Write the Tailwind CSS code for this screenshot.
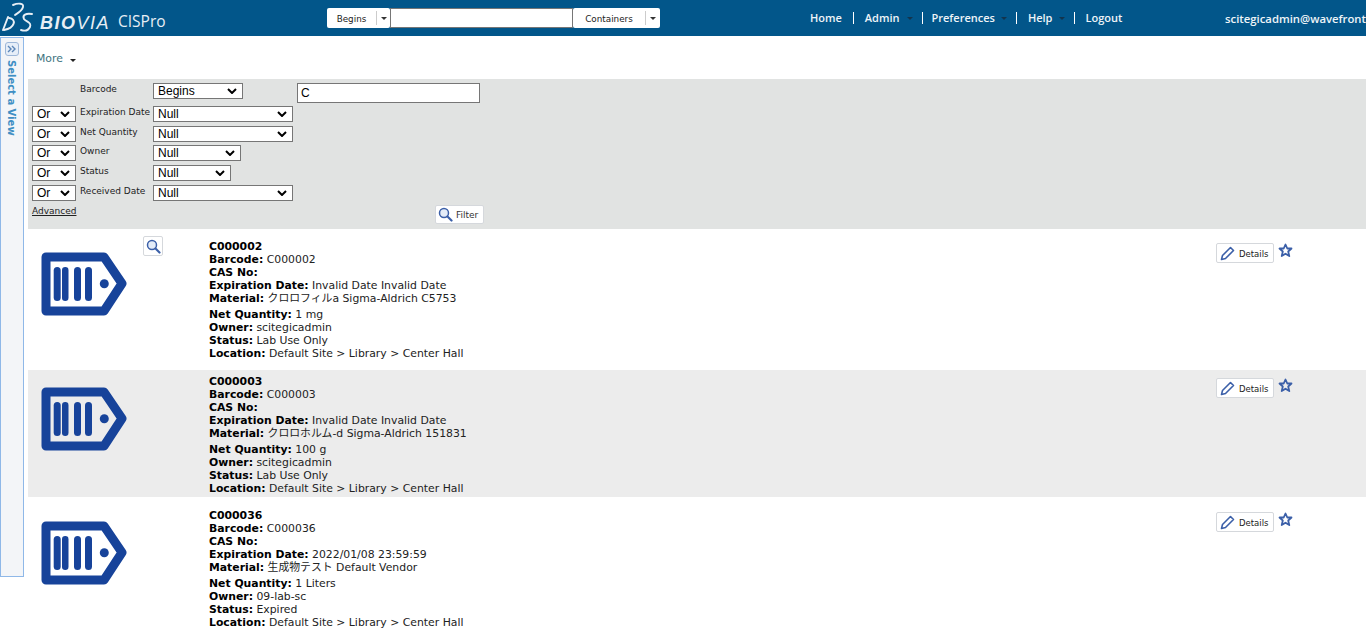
<!DOCTYPE html>
<html>
<head>
<meta charset="utf-8">
<script src="https://cdn.jsdelivr.net/npm/@tailwindcss/browser@4"></script>
<title>BIOVIA CISPro</title>
</head>
<body class="h-[635px] overflow-hidden bg-white font-['DejaVu_Sans',sans-serif] text-[10.85px] text-black">
<header class="flex h-9 items-start bg-[#02568a] text-white">
  <div class="flex h-9 w-[327px] items-start">
    <svg width="36" height="36" viewBox="0 0 36 36" fill="none" stroke="#e8eff5" stroke-width="1.9" stroke-linecap="round">
      <path d="M13 5 C18 3 24 3 23 7 C22 11 18 13 15 15"/>
      <path d="M8 17 L3 30"/>
      <path d="M9 18 C17 19 15 28 4 30"/>
      <path d="M32 14 C26 13 22 15 24 19 C26 22 32 22 30 27 C28 31 24 31 21 30"/>
    </svg>
    <span class="ml-1 mt-[10px] font-['Liberation_Sans',sans-serif] text-[18px] font-bold italic tracking-[1.5px] text-[#e8eff5]">BIO<span class="font-normal">VIA</span></span>
    <span class="ml-2 mt-[10px] font-['Open_Sans',sans-serif] text-[15.5px] text-[#e8eff5]">CISPro</span>
  </div>
  <div class="mt-2 flex h-5 items-stretch text-[8.8px] text-[#222]">
    <div class="flex w-[63px] items-center rounded-[2px] bg-white">
      <span class="w-[49px] pt-[3px] text-center">Begins</span>
      <span class="h-[14px] w-px bg-[#ccc]"></span>
      <span class="ml-1 h-0 w-0 border-x-[3px] border-t-[3px] border-x-transparent border-t-[#333]"></span>
    </div>
    <input type="text" class="w-[183px] border border-[#767676] bg-white">
    <div class="flex w-[87px] items-center rounded-[2px] bg-white">
      <span class="w-[72px] pt-[3px] text-center">Containers</span>
      <span class="h-[14px] w-px bg-[#ccc]"></span>
      <span class="ml-1 h-0 w-0 border-x-[3px] border-t-[3px] border-x-transparent border-t-[#333]"></span>
    </div>
  </div>
  <nav class="ml-[150px] mt-[11px] flex items-center font-['Open_Sans',sans-serif] text-[11px] leading-[14px] font-semibold text-[#eef4f8]">
    <span>Home</span>
    <span class="mx-[11px] h-3 w-px bg-white"></span>
    <span>Admin</span>
    <span class="ml-[7px] mr-[9px] h-0 w-0 border-x-[3px] border-t-[3px] border-x-transparent border-t-[#12344d]"></span>
    <span class="mr-[9px] h-3 w-px bg-white"></span>
    <span>Preferences</span>
    <span class="ml-[6px] mr-[9px] h-0 w-0 border-x-[3px] border-t-[3px] border-x-transparent border-t-[#12344d]"></span>
    <span class="mr-[11px] h-3 w-px bg-white"></span>
    <span>Help</span>
    <span class="ml-[7px] mr-[9px] h-0 w-0 border-x-[3px] border-t-[3px] border-x-transparent border-t-[#12344d]"></span>
    <span class="mr-[10px] h-3 w-px bg-white"></span>
    <span>Logout</span>
  </nav>
  <div class="ml-auto mt-3 whitespace-nowrap font-['Open_Sans',sans-serif] text-[11.3px] leading-[14px] font-semibold text-[#eef4f8]">scitegicadmin@wavefront</div>
</header>
<div class="flex items-start">
  <aside class="mt-px flex h-[540px] w-6 shrink-0 flex-col items-center border border-[#8fb8e8] bg-[#f3f5f8] pt-1">
    <div class="flex h-[14px] w-[14px] items-center justify-center rounded-[3px] border border-[#9db7d8] bg-[#e6eef8] text-[#5c86b8]">
      <svg width="10" height="8" viewBox="0 0 10 8" fill="none" stroke="currentColor" stroke-width="1.4"><path d="M1 1l3 3-3 3M5 1l3 3-3 3"/></svg>
    </div>
    <span class="mr-[3px] mt-1 text-[10px] font-bold leading-3 text-[#3f8fc4] [writing-mode:vertical-rl]">Select a View</span>
  </aside>
  <main class="ml-1 min-w-0 flex-1">
    <div class="flex h-[43px] items-center pl-2 pt-[3px] text-[#3e7480]">
      <span>More</span>
      <span class="ml-[7px] mt-[3px] h-0 w-0 border-x-[3px] border-t-[3px] border-x-transparent border-t-[#222]"></span>
    </div>
    <section class="h-[150px] bg-[#e1e3e2] pl-1 pt-1 text-[9px] leading-3 text-[#222]">
      <div class="flex h-[23px] items-start">
        <span class="ml-12 w-[73px] whitespace-nowrap">Barcode</span>
        <select class="h-4 w-[90px] appearance-none border border-[#767676] bg-white bg-[url('data:image/svg+xml,%3Csvg%20xmlns=%22http://www.w3.org/2000/svg%22%20width=%2210%22%20height=%226%22%3E%3Cpath%20d=%22M1%201l4%204%204-4%22%20fill=%22none%22%20stroke=%22%23000%22%20stroke-width=%222%22/%3E%3C/svg%3E')] bg-[position:right_5px_center] bg-no-repeat pl-1 font-['Liberation_Sans',sans-serif] text-[12px] leading-[14px] text-black"><option>Begins</option></select>
        <input type="text" value="C" class="ml-[54px] h-5 w-[183px] border border-[#767676] bg-white px-[3px] font-['Liberation_Sans',sans-serif] text-[12px] text-black">
      </div>
      <div class="flex h-5 items-start">
        <select class="h-4 w-11 appearance-none border border-[#767676] bg-white bg-[url('data:image/svg+xml,%3Csvg%20xmlns=%22http://www.w3.org/2000/svg%22%20width=%2210%22%20height=%226%22%3E%3Cpath%20d=%22M1%201l4%204%204-4%22%20fill=%22none%22%20stroke=%22%23000%22%20stroke-width=%222%22/%3E%3C/svg%3E')] bg-[position:right_5px_center] bg-no-repeat pl-1 font-['Liberation_Sans',sans-serif] text-[12px] leading-[14px] text-black"><option>Or</option></select>
        <span class="ml-1 w-[73px] whitespace-nowrap">Expiration Date</span>
        <select class="h-4 w-[140px] appearance-none border border-[#767676] bg-white bg-[url('data:image/svg+xml,%3Csvg%20xmlns=%22http://www.w3.org/2000/svg%22%20width=%2210%22%20height=%226%22%3E%3Cpath%20d=%22M1%201l4%204%204-4%22%20fill=%22none%22%20stroke=%22%23000%22%20stroke-width=%222%22/%3E%3C/svg%3E')] bg-[position:right_5px_center] bg-no-repeat pl-1 font-['Liberation_Sans',sans-serif] text-[12px] leading-[14px] text-black"><option>Null</option></select>
      </div>
      <div class="flex h-[19px] items-start">
        <select class="h-4 w-11 appearance-none border border-[#767676] bg-white bg-[url('data:image/svg+xml,%3Csvg%20xmlns=%22http://www.w3.org/2000/svg%22%20width=%2210%22%20height=%226%22%3E%3Cpath%20d=%22M1%201l4%204%204-4%22%20fill=%22none%22%20stroke=%22%23000%22%20stroke-width=%222%22/%3E%3C/svg%3E')] bg-[position:right_5px_center] bg-no-repeat pl-1 font-['Liberation_Sans',sans-serif] text-[12px] leading-[14px] text-black"><option>Or</option></select>
        <span class="ml-1 w-[73px] whitespace-nowrap">Net Quantity</span>
        <select class="h-4 w-[140px] appearance-none border border-[#767676] bg-white bg-[url('data:image/svg+xml,%3Csvg%20xmlns=%22http://www.w3.org/2000/svg%22%20width=%2210%22%20height=%226%22%3E%3Cpath%20d=%22M1%201l4%204%204-4%22%20fill=%22none%22%20stroke=%22%23000%22%20stroke-width=%222%22/%3E%3C/svg%3E')] bg-[position:right_5px_center] bg-no-repeat pl-1 font-['Liberation_Sans',sans-serif] text-[12px] leading-[14px] text-black"><option>Null</option></select>
      </div>
      <div class="flex h-5 items-start">
        <select class="h-4 w-11 appearance-none border border-[#767676] bg-white bg-[url('data:image/svg+xml,%3Csvg%20xmlns=%22http://www.w3.org/2000/svg%22%20width=%2210%22%20height=%226%22%3E%3Cpath%20d=%22M1%201l4%204%204-4%22%20fill=%22none%22%20stroke=%22%23000%22%20stroke-width=%222%22/%3E%3C/svg%3E')] bg-[position:right_5px_center] bg-no-repeat pl-1 font-['Liberation_Sans',sans-serif] text-[12px] leading-[14px] text-black"><option>Or</option></select>
        <span class="ml-1 w-[73px] whitespace-nowrap">Owner</span>
        <select class="h-4 w-[88px] appearance-none border border-[#767676] bg-white bg-[url('data:image/svg+xml,%3Csvg%20xmlns=%22http://www.w3.org/2000/svg%22%20width=%2210%22%20height=%226%22%3E%3Cpath%20d=%22M1%201l4%204%204-4%22%20fill=%22none%22%20stroke=%22%23000%22%20stroke-width=%222%22/%3E%3C/svg%3E')] bg-[position:right_5px_center] bg-no-repeat pl-1 font-['Liberation_Sans',sans-serif] text-[12px] leading-[14px] text-black"><option>Null</option></select>
      </div>
      <div class="flex h-5 items-start">
        <select class="h-4 w-11 appearance-none border border-[#767676] bg-white bg-[url('data:image/svg+xml,%3Csvg%20xmlns=%22http://www.w3.org/2000/svg%22%20width=%2210%22%20height=%226%22%3E%3Cpath%20d=%22M1%201l4%204%204-4%22%20fill=%22none%22%20stroke=%22%23000%22%20stroke-width=%222%22/%3E%3C/svg%3E')] bg-[position:right_5px_center] bg-no-repeat pl-1 font-['Liberation_Sans',sans-serif] text-[12px] leading-[14px] text-black"><option>Or</option></select>
        <span class="ml-1 w-[73px] whitespace-nowrap">Status</span>
        <select class="h-4 w-[78px] appearance-none border border-[#767676] bg-white bg-[url('data:image/svg+xml,%3Csvg%20xmlns=%22http://www.w3.org/2000/svg%22%20width=%2210%22%20height=%226%22%3E%3Cpath%20d=%22M1%201l4%204%204-4%22%20fill=%22none%22%20stroke=%22%23000%22%20stroke-width=%222%22/%3E%3C/svg%3E')] bg-[position:right_5px_center] bg-no-repeat pl-1 font-['Liberation_Sans',sans-serif] text-[12px] leading-[14px] text-black"><option>Null</option></select>
      </div>
      <div class="flex h-5 items-start">
        <select class="h-4 w-11 appearance-none border border-[#767676] bg-white bg-[url('data:image/svg+xml,%3Csvg%20xmlns=%22http://www.w3.org/2000/svg%22%20width=%2210%22%20height=%226%22%3E%3Cpath%20d=%22M1%201l4%204%204-4%22%20fill=%22none%22%20stroke=%22%23000%22%20stroke-width=%222%22/%3E%3C/svg%3E')] bg-[position:right_5px_center] bg-no-repeat pl-1 font-['Liberation_Sans',sans-serif] text-[12px] leading-[14px] text-black"><option>Or</option></select>
        <span class="ml-1 w-[73px] whitespace-nowrap">Received Date</span>
        <select class="h-4 w-[140px] appearance-none border border-[#767676] bg-white bg-[url('data:image/svg+xml,%3Csvg%20xmlns=%22http://www.w3.org/2000/svg%22%20width=%2210%22%20height=%226%22%3E%3Cpath%20d=%22M1%201l4%204%204-4%22%20fill=%22none%22%20stroke=%22%23000%22%20stroke-width=%222%22/%3E%3C/svg%3E')] bg-[position:right_5px_center] bg-no-repeat pl-1 font-['Liberation_Sans',sans-serif] text-[12px] leading-[14px] text-black"><option>Null</option></select>
      </div>
      <div class="flex items-start">
        <a class="w-[403px] text-[9px] text-[#222] underline">Advanced</a>
        <button class="flex h-[19px] w-[49px] items-center gap-[3px] rounded-[2px] border border-[#d5d8dc] bg-white pl-[2px] text-[9px] text-[#333]">
          <svg width="15" height="15" viewBox="0 0 15 15" fill="none" stroke="#3b5fa8"><circle cx="6" cy="6" r="4.5" stroke-width="1.5" fill="#e4ecf8"/><path d="M9.5 9.5l4 4" stroke-width="2.2" stroke-linecap="round"/></svg>
          <span class="pt-px">Filter</span>
        </button>
      </div>
    </section>
    <article class="flex h-[141px] items-start bg-white pt-[11px]">
      <div class="relative ml-[13px] w-[168px] shrink-0 pt-3">
        <svg width="86" height="64" viewBox="0 0 86 64" fill="#17439a"><path d="M5 5H63L81 31.5L63 59H5Z" fill="none" stroke="#17439a" stroke-width="9" stroke-linejoin="round"/><rect x="12.7" y="15" width="7" height="34" rx="3.5"/><rect x="21" y="15" width="6.5" height="34" rx="3.2"/><rect x="33" y="15" width="7" height="34" rx="3.5"/><rect x="44" y="15" width="7" height="34" rx="3.5"/><circle cx="63.3" cy="31.7" r="4.5"/></svg>
        <button class="absolute left-[102px] top-[-4px] flex h-5 w-5 items-center justify-center rounded-[2px] border border-[#d5d8dc] bg-white">
          <svg width="15" height="15" viewBox="0 0 15 15" fill="none" stroke="#3b5fa8"><circle cx="6" cy="6" r="4.5" stroke-width="1.5" fill="#e4ecf8"/><path d="M9.5 9.5l4 4" stroke-width="2.2" stroke-linecap="round"/></svg>
        </button>
      </div>
      <div class="w-[1007px] shrink-0 leading-[13px] text-[#222]">
        <div class="font-bold text-black">C000002</div>
        <div><b class="text-black">Barcode:</b> C000002</div>
        <div><b class="text-black">CAS No:</b></div>
        <div><b class="text-black">Expiration Date:</b> Invalid Date Invalid Date</div>
        <div class="mb-[3px]"><b class="text-black">Material:</b> <span class="font-['DejaVu_Sans','Noto_Sans_CJK_JP',sans-serif]">クロロフィルa Sigma-Aldrich C5753</span></div>
        <div><b class="text-black">Net Quantity:</b> 1 mg</div>
        <div><b class="text-black">Owner:</b> scitegicadmin</div>
        <div><b class="text-black">Status:</b> Lab Use Only</div>
        <div><b class="text-black">Location:</b> Default Site &gt; Library &gt; Center Hall</div>
      </div>
      <div class="mt-[3px] flex items-start">
        <button class="flex h-5 w-[58px] items-center gap-1 rounded-[2px] border border-[#d5d8dc] bg-white pl-[3px] text-[8.5px] text-[#222]">
          <svg width="15" height="15" viewBox="0 0 15 15" fill="none" stroke="#3b5fa8" stroke-width="1.6" stroke-linejoin="round"><path d="M1.5 13.5l1-4L10.5 1.5l3 3-8 8z"/></svg><span class="pt-[2px]">Details</span>
        </button>
        <svg class="ml-1" width="15" height="15" viewBox="0 0 15 15" fill="none" stroke="#3b5fa8" stroke-width="1.8" stroke-linejoin="round"><path d="M7.5 1.5l1.8 4h4.2l-3.3 3 1.1 4.6-3.8-2.4-3.8 2.4 1.1-4.6-3.3-3h4.2z"/></svg>
      </div>
    </article>
    <article class="flex h-[127px] items-start bg-[#ececec] pt-[5px]">
      <div class="ml-[13px] w-[168px] shrink-0 pt-3">
        <svg width="86" height="64" viewBox="0 0 86 64" fill="#17439a"><path d="M5 5H63L81 31.5L63 59H5Z" fill="none" stroke="#17439a" stroke-width="9" stroke-linejoin="round"/><rect x="12.7" y="15" width="7" height="34" rx="3.5"/><rect x="21" y="15" width="6.5" height="34" rx="3.2"/><rect x="33" y="15" width="7" height="34" rx="3.5"/><rect x="44" y="15" width="7" height="34" rx="3.5"/><circle cx="63.3" cy="31.7" r="4.5"/></svg>
      </div>
      <div class="w-[1007px] shrink-0 leading-[13px] text-[#222]">
        <div class="font-bold text-black">C000003</div>
        <div><b class="text-black">Barcode:</b> C000003</div>
        <div><b class="text-black">CAS No:</b></div>
        <div><b class="text-black">Expiration Date:</b> Invalid Date Invalid Date</div>
        <div class="mb-[3px]"><b class="text-black">Material:</b> <span class="font-['DejaVu_Sans','Noto_Sans_CJK_JP',sans-serif]">クロロホルム-d Sigma-Aldrich 151831</span></div>
        <div><b class="text-black">Net Quantity:</b> 100 g</div>
        <div><b class="text-black">Owner:</b> scitegicadmin</div>
        <div><b class="text-black">Status:</b> Lab Use Only</div>
        <div><b class="text-black">Location:</b> Default Site &gt; Library &gt; Center Hall</div>
      </div>
      <div class="mt-[3px] flex items-start">
        <button class="flex h-5 w-[58px] items-center gap-1 rounded-[2px] border border-[#d5d8dc] bg-white pl-[3px] text-[8.5px] text-[#222]">
          <svg width="15" height="15" viewBox="0 0 15 15" fill="none" stroke="#3b5fa8" stroke-width="1.6" stroke-linejoin="round"><path d="M1.5 13.5l1-4L10.5 1.5l3 3-8 8z"/></svg><span class="pt-[2px]">Details</span>
        </button>
        <svg class="ml-1" width="15" height="15" viewBox="0 0 15 15" fill="none" stroke="#3b5fa8" stroke-width="1.8" stroke-linejoin="round"><path d="M7.5 1.5l1.8 4h4.2l-3.3 3 1.1 4.6-3.8-2.4-3.8 2.4 1.1-4.6-3.3-3h4.2z"/></svg>
      </div>
    </article>
    <article class="flex h-[138px] items-start bg-white pt-3">
      <div class="ml-[13px] w-[168px] shrink-0 pt-3">
        <svg width="86" height="64" viewBox="0 0 86 64" fill="#17439a"><path d="M5 5H63L81 31.5L63 59H5Z" fill="none" stroke="#17439a" stroke-width="9" stroke-linejoin="round"/><rect x="12.7" y="15" width="7" height="34" rx="3.5"/><rect x="21" y="15" width="6.5" height="34" rx="3.2"/><rect x="33" y="15" width="7" height="34" rx="3.5"/><rect x="44" y="15" width="7" height="34" rx="3.5"/><circle cx="63.3" cy="31.7" r="4.5"/></svg>
      </div>
      <div class="w-[1007px] shrink-0 leading-[13px] text-[#222]">
        <div class="font-bold text-black">C000036</div>
        <div><b class="text-black">Barcode:</b> C000036</div>
        <div><b class="text-black">CAS No:</b></div>
        <div><b class="text-black">Expiration Date:</b> 2022/01/08 23:59:59</div>
        <div class="mb-[3px]"><b class="text-black">Material:</b> <span class="font-['DejaVu_Sans','Noto_Sans_CJK_JP',sans-serif]">生成物テスト Default Vendor</span></div>
        <div><b class="text-black">Net Quantity:</b> 1 Liters</div>
        <div><b class="text-black">Owner:</b> 09-lab-sc</div>
        <div><b class="text-black">Status:</b> Expired</div>
        <div><b class="text-black">Location:</b> Default Site &gt; Library &gt; Center Hall</div>
      </div>
      <div class="mt-[3px] flex items-start">
        <button class="flex h-5 w-[58px] items-center gap-1 rounded-[2px] border border-[#d5d8dc] bg-white pl-[3px] text-[8.5px] text-[#222]">
          <svg width="15" height="15" viewBox="0 0 15 15" fill="none" stroke="#3b5fa8" stroke-width="1.6" stroke-linejoin="round"><path d="M1.5 13.5l1-4L10.5 1.5l3 3-8 8z"/></svg><span class="pt-[2px]">Details</span>
        </button>
        <svg class="ml-1" width="15" height="15" viewBox="0 0 15 15" fill="none" stroke="#3b5fa8" stroke-width="1.8" stroke-linejoin="round"><path d="M7.5 1.5l1.8 4h4.2l-3.3 3 1.1 4.6-3.8-2.4-3.8 2.4 1.1-4.6-3.3-3h4.2z"/></svg>
      </div>
    </article>
  </main>
</div>
</body>
</html>
